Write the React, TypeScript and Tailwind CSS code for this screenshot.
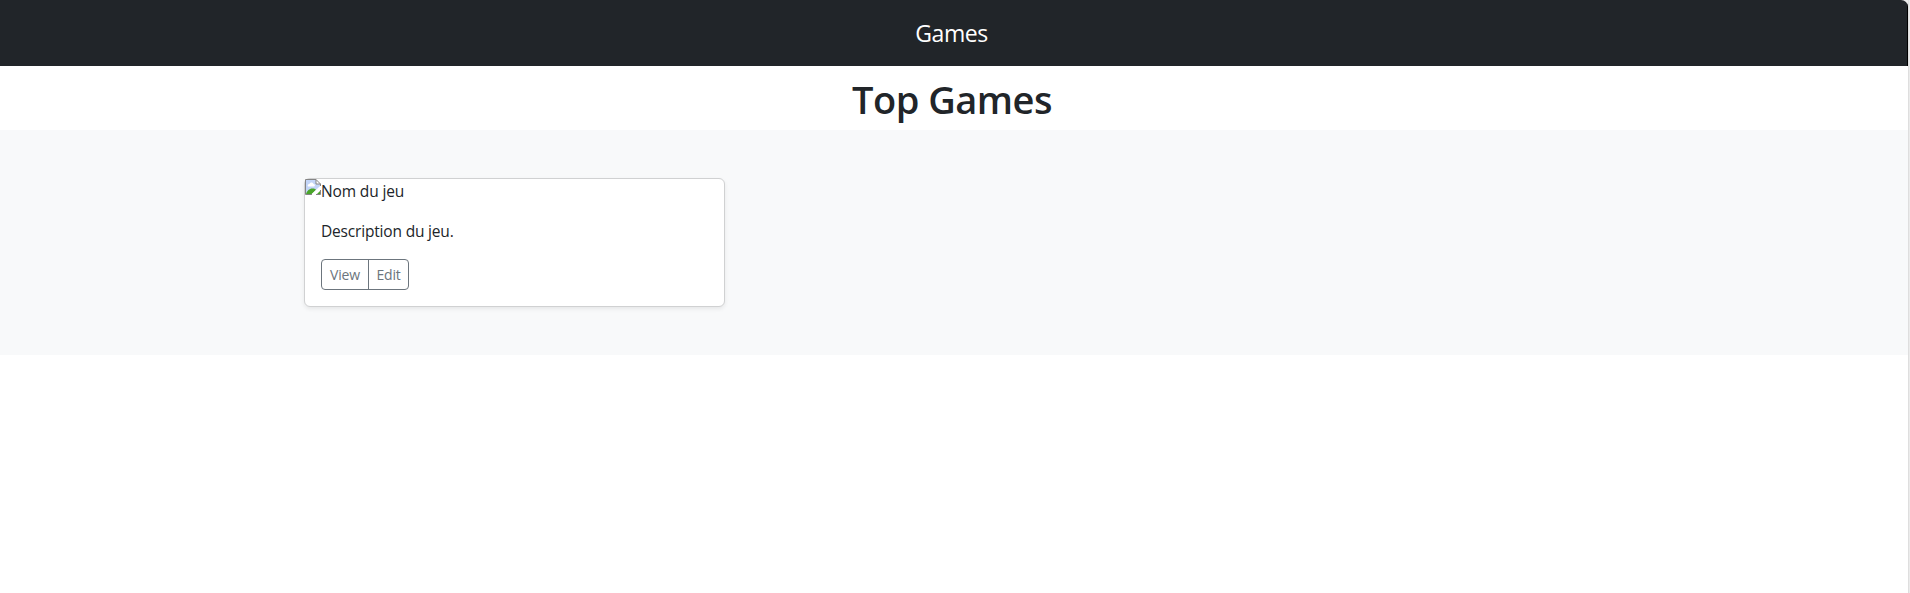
export default function App() {
  return (
    <div className="flex h-[593px] w-full overflow-hidden bg-[#ebebeb] font-['Open_Sans','Noto_Sans',sans-serif] text-[#212529]">
      <div className="flex w-[1908px] shrink-0 flex-col overflow-hidden rounded-tr-[7px] bg-white">
        <header className="flex h-[66px] shrink-0 items-center justify-center border-r border-black bg-[#212529] pr-1">
          <a className="text-[23px] leading-9 tracking-[-0.45px] text-white">Games</a>
        </header>
        <main className="flex flex-col">
          <h1 className="h-16 pt-[9px] pr-1 text-center text-[38px] leading-[48px] font-semibold tracking-[-0.5px]">
            Top Games
          </h1>
          <section className="h-[225px] bg-[#f8f9fa] pt-12 pl-[304px]">
            <article className="flex h-[129px] w-[421px] flex-col rounded-md border border-[#d0d1d2] bg-white shadow-[0_2px_4px_rgba(0,0,0,0.075)]">
              <div className="flex h-6 items-start">
                <BrokenImage />
                <span className="text-[15.5px] leading-6 tracking-[-0.13px]">Nom du jeu</span>
              </div>
              <div className="p-4">
                <p className="mb-4 text-[15.5px] leading-6 tracking-[-0.18px]">Description du jeu.</p>
                <div className="flex h-[31px] w-[88px] divide-x divide-[#6c757d] rounded border border-[#6c757d] text-[14px] leading-[30px] tracking-[-0.2px] text-[#6c757d]">
                  <button className="w-[47px]">View</button>
                  <button className="w-[39px]">Edit</button>
                </div>
              </div>
            </article>
          </section>
        </main>
      </div>
      <div className="w-px shrink-0 bg-[#dedede]" />
    </div>
  );
}

function BrokenImage() {
  return (
    <svg className="h-4 w-4 shrink-0" viewBox="0 0 16 16" aria-hidden="true">
      <path d="M1 15V1h10v4h4v3l-7 7z" fill="#c3d5f7" />
      <path d="M3 7.5C2 5.5 4 5 4.5 5 5 3 8 3 8.5 5c1.5 0 2 2 .5 2.5z" fill="#fff" />
      <path d="M1 15c1-3.5 4-6 7-5.5 1.5 0 2.5.5 3 1.5l-4 4z" fill="#4ba52a" />
      <path d="M.5 15.5V.5H11l4.500 4.500v2M.5 15.5H7M11 15.5h4.500V11M11 .5V5h4.500" fill="none" stroke="#858585" />
      <path d="M7.500 16 16 8" stroke="#fff" strokeWidth="2.5" />
      <path d="M12 15l3-3v3z" fill="#4ba52a" />
    </svg>
  );
}
